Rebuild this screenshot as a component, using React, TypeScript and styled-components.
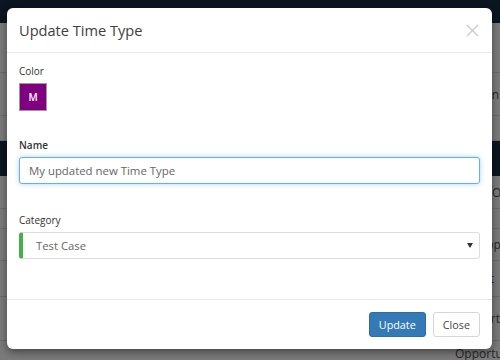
import styled, { createGlobalStyle } from "styled-components";

const GlobalStyle = createGlobalStyle`
  html, body {
    margin: 0;
    padding: 0;
  }
  body {
    font-family: "Open Sans", "Liberation Sans", sans-serif;
    background: #7b7b7b;
  }
  * {
    box-sizing: border-box;
  }
`;

// dimmed page behind the modal
const Page = styled.div`
  position: relative;
  width: 500px;
  height: 360px;
  overflow: hidden;
  background: #7b7b7b;
`;

const NavBar = styled.div`
  height: 23px;
  background: #0b1521;
`;

const Row = styled.div<{ h: number; dark?: boolean }>`
  display: flex;
  align-items: center;
  height: ${(p) => p.h}px;
  border-bottom: 1px solid ${(p) => (p.dark ? "#0b1521" : "#6c6c6c")};
  background: ${(p) => (p.dark ? "#0b1621" : "transparent")};
`;

const Cell = styled.span`
  margin-left: 455px;
  font-size: 12px;
  color: #262626;
  white-space: nowrap;
`;

const Modal = styled.div`
  position: absolute;
  top: 8px;
  left: 7px;
  width: 485px;
  background: #fff;
  border-radius: 6px;
  box-shadow: 0 3px 9px rgba(0, 0, 0, 0.45);
`;

const Header = styled.div`
  display: flex;
  align-items: center;
  justify-content: space-between;
  padding: 11px 13px 11px 12px;
  border-bottom: 1px solid #e8e8e8;
`;

const Title = styled.h4`
  margin: 0;
  font-size: 14.6px;
  line-height: 22px;
  font-weight: 400;
  color: #404040;
`;

const CloseX = styled.button`
  display: flex;
  padding: 0;
  border: none;
  background: none;
  cursor: pointer;
`;

const Body = styled.div`
  padding: 11px 12px 40px;
`;

const Group = styled.div<{ gap: number }>`
  margin-bottom: ${(p) => p.gap}px;
`;

const Label = styled.label<{ strong?: boolean }>`
  display: block;
  margin-bottom: 5px;
  font-size: 10px;
  line-height: 14px;
  font-weight: ${(p) => (p.strong ? 600 : 400)};
  color: #333;
`;

const Swatch = styled.div<{ color: string }>`
  display: flex;
  align-items: center;
  justify-content: center;
  width: 28px;
  height: 28px;
  border: 1px solid #9a9a9a;
  background: ${(p) => p.color};
  color: #fff;
  font-size: 10px;
  font-weight: 600;
`;

const TextInput = styled.input`
  display: block;
  width: 100%;
  height: 27px;
  padding: 0 9px;
  border: 1px solid #66afe9;
  border-radius: 3px;
  box-shadow: 0 0 5px rgba(102, 175, 233, 0.55);
  font-family: inherit;
  font-size: 11.4px;
  color: #666;
  outline: none;
`;

const Select = styled.div<{ accent: string }>`
  display: flex;
  align-items: center;
  justify-content: space-between;
  height: 27px;
  padding: 0 6px 0 13px;
  border: 1px solid #dcdcdc;
  border-left: 4px solid ${(p) => p.accent};
  border-radius: 3px;
  font-size: 11.3px;
  color: #666;
`;

const Caret = styled.span`
  width: 0;
  height: 0;
  border-left: 3px solid transparent;
  border-right: 3px solid transparent;
  border-top: 5px solid #333;
`;

const Footer = styled.div`
  display: flex;
  justify-content: flex-end;
  gap: 7px;
  padding: 12px 12px;
  border-top: 1px solid #e8e8e8;
`;

const Button = styled.button<{ primary?: boolean }>`
  height: 25px;
  padding: 0 9px;
  border: 1px solid ${(p) => (p.primary ? "#2e6da4" : "#d6d6d6")};
  border-radius: 3px;
  background: ${(p) => (p.primary ? "#337ab7" : "#fff")};
  color: ${(p) => (p.primary ? "#fff" : "#444")};
  font-family: inherit;
  font-size: 10.8px;
  cursor: pointer;
`;

export default function App() {
  return (
    <>
      <GlobalStyle />
      <Page>
        <NavBar />
        <Row h={50} />
        <Row h={43}>
          <Cell>Domain</Cell>
        </Row>
        <Row h={25} />
        <Row h={35} dark />
        <Row h={33}>
          <Cell>Travel Ops</Cell>
        </Row>
        <Row h={20} />
        <Row h={32}>
          <Cell>Development</Cell>
        </Row>
        <Row h={36}>
          <Cell>Project</Cell>
        </Row>
        <Row h={44}>
          <Cell>Support</Cell>
        </Row>
        <Row h={26}>
          <Cell>Opportunity</Cell>
        </Row>

        <Modal>
          <Header>
            <Title>Update Time Type</Title>
            <CloseX aria-label="Close">
              <svg width="13" height="13" viewBox="0 0 13 13">
                <path
                  d="M1 1L12 12M12 1L1 12"
                  stroke="#c9c9c9"
                  strokeWidth="1.3"
                  fill="none"
                />
              </svg>
            </CloseX>
          </Header>
          <Body>
            <Group gap={27}>
              <Label>Color</Label>
              <Swatch color="#800080">M</Swatch>
            </Group>
            <Group gap={29}>
              <Label strong>Name</Label>
              <TextInput defaultValue="My updated new Time Type" />
            </Group>
            <Group gap={0}>
              <Label>Category</Label>
              <Select accent="#44b04a">
                <span>Test Case</span>
                <Caret />
              </Select>
            </Group>
          </Body>
          <Footer>
            <Button primary>Update</Button>
            <Button>Close</Button>
          </Footer>
        </Modal>
      </Page>
    </>
  );
}
